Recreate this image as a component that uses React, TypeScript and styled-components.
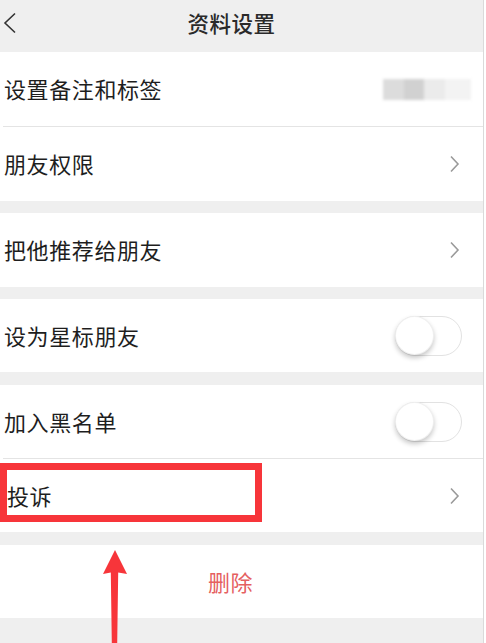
import React from "react";
import styled, { createGlobalStyle } from "styled-components";

const Global = createGlobalStyle`
  html, body { margin: 0; padding: 0; background: #ffffff; }
  body { font-family: "Noto Sans CJK SC", "Noto Sans", sans-serif; }
  * { box-sizing: border-box; }
`;

const Page = styled.div`
  position: relative;
  width: 484px;
  min-height: 643px;
  background: #efefef;
  border-right: 1px solid #dadada;
  display: flex;
  flex-direction: column;
  overflow: hidden;
`;

const Header = styled.header`
  height: 52px;
  background: #efefef;
  display: grid;
  grid-template-columns: 60px 1fr 80px;
  align-items: center;
`;

const Back = styled.div`
  padding-left: 3px;
  display: flex;
  align-items: center;
  height: 100%;
  padding-bottom: 6px;
`;

const Title = styled.h1`
  margin: 0;
  text-align: center;
  font-size: 21.5px;
  line-height: 1;
  font-weight: 500;
  color: #2a2a2a;
  padding-bottom: 6px;
  letter-spacing: 0.5px;
`;

const Group = styled.section<{ $gap: number }>`
  margin-top: ${(p) => p.$gap}px;
  background: #ffffff;
  display: flex;
  flex-direction: column;
`;

const Row = styled.div<{ $h: number }>`
  position: relative;
  height: ${(p) => p.$h}px;
  display: flex;
  align-items: center;
  justify-content: space-between;
  padding-left: 4px;
`;

const Divider = styled.div`
  height: 1px;
  margin-left: 3px;
  background: #e4e4e4;
`;

const Label = styled.span<{ $pl?: number }>`
  font-size: 22px;
  line-height: 1;
  color: #1e1e1e;
  letter-spacing: 0.6px;
  padding-left: ${(p) => p.$pl ?? 0}px;
  padding-bottom: 2px;
`;

const Trail = styled.div<{ $mr: number }>`
  margin-right: ${(p) => p.$mr}px;
  display: flex;
  align-items: center;
`;

const Blur = styled.div`
  display: flex;
  height: 21px;
  filter: blur(1.5px);
`;

const BlurCell = styled.div<{ $c: string; $w: number }>`
  width: ${(p) => p.$w}px;
  background: ${(p) => p.$c};
`;

const Track = styled.div`
  position: relative;
  width: 67px;
  height: 40px;
  border-radius: 20px;
  border: 1.5px solid #e2e2e2;
  background: #ffffff;
`;

const Knob = styled.div`
  position: absolute;
  left: -1px;
  top: -1px;
  width: 39px;
  height: 39px;
  border-radius: 50%;
  background: #ffffff;
  border: 1px solid rgba(0, 0, 0, 0.06);
  box-shadow: 0 3px 5px rgba(0, 0, 0, 0.22);
`;

const DeleteRow = styled.div`
  height: 73px;
  display: flex;
  align-items: center;
  justify-content: center;
  padding-bottom: 2px;
`;

const DeleteText = styled.span`
  font-size: 22px;
  line-height: 1;
  color: #e5605f;
  margin-left: -22px;
  letter-spacing: 0.5px;
`;

const RedBox = styled.div`
  position: absolute;
  left: 0;
  top: 4px;
  width: 262px;
  height: 59px;
  border: 7px solid #f7353a;
`;

const Arrow = styled.svg`
  position: absolute;
  left: 100px;
  top: 548px;
`;

const Chevron = () => (
  <svg width="11" height="18" viewBox="0 0 11 18">
    <path d="M2 1.5 L9 9 L2 16.5" fill="none" stroke="#9a9a9a" strokeWidth="1.6" />
  </svg>
);

const Toggle = () => (
  <Track>
    <Knob />
  </Track>
);

export default function App() {
  return (
    <>
      <Global />
      <Page>
        <Header>
          <Back>
            <svg width="14" height="22" viewBox="0 0 14 22">
              <path d="M12 1.5 L2 11 L12 20.5" fill="none" stroke="#333" strokeWidth="1.6" />
            </svg>
          </Back>
          <Title>资料设置</Title>
          <div />
        </Header>

        <Group $gap={0}>
          <Row $h={74}>
            <Label>设置备注和标签</Label>
            <Trail $mr={12}>
              <Blur>
                <BlurCell $c="#dcdcdc" $w={21} />
                <BlurCell $c="#d1d1d1" $w={20} />
                <BlurCell $c="#ebebeb" $w={21} />
                <BlurCell $c="#f3f3f3" $w={26} />
              </Blur>
            </Trail>
          </Row>
          <Divider />
          <Row $h={74}>
            <Label>朋友权限</Label>
            <Trail $mr={23}>
              <Chevron />
            </Trail>
          </Row>
        </Group>

        <Group $gap={12}>
          <Row $h={74}>
            <Label>把他推荐给朋友</Label>
            <Trail $mr={23}>
              <Chevron />
            </Trail>
          </Row>
        </Group>

        <Group $gap={12}>
          <Row $h={73}>
            <Label>设为星标朋友</Label>
            <Trail $mr={21}>
              <Toggle />
            </Trail>
          </Row>
        </Group>

        <Group $gap={13}>
          <Row $h={73}>
            <Label>加入黑名单</Label>
            <Trail $mr={21}>
              <Toggle />
            </Trail>
          </Row>
          <Divider />
          <Row $h={73}>
            <Label $pl={3}>投诉</Label>
            <Trail $mr={23}>
              <Chevron />
            </Trail>
            <RedBox />
          </Row>
        </Group>

        <Group $gap={13}>
          <DeleteRow>
            <DeleteText>删除</DeleteText>
          </DeleteRow>
        </Group>

        <Arrow width="30" height="95" viewBox="0 0 30 95">
          <path
            d="M15 2 L27 26 L18.2 24.5 L17.2 95 L11.8 95 L10.8 24.5 L3 26 Z"
            fill="#f7353a"
          />
        </Arrow>
      </Page>
    </>
  );
}
